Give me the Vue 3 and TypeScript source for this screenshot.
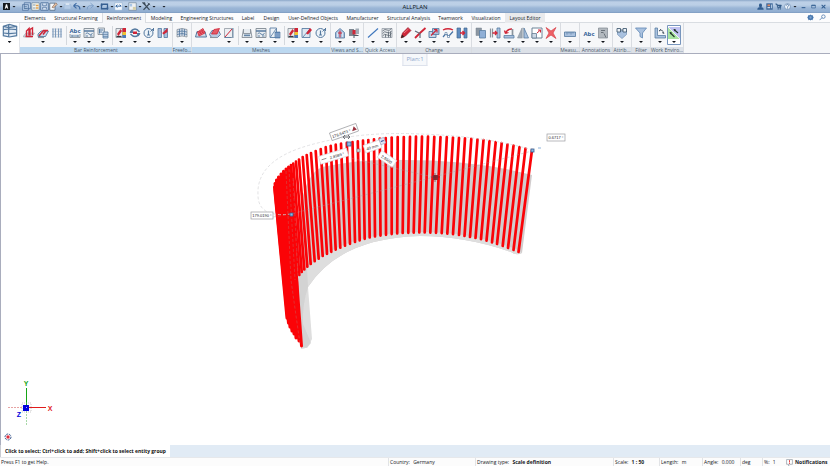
<script setup lang="ts">
type Shape = [d: string, fill: string, stroke?: string, width?: number]
interface Command { icon: string; name: string; menu?: boolean; active?: boolean }
interface Group { label: string; tone: string; sets: Command[][] }

const B = '#54799f'
const L = '#a9c1df'
const R = '#d02638'
const G = '#8b949d'
const N = 'none'

const icons: Record<string, Shape[]> = {
  views: [['M2 5l9-3 11 3v14l-11 2-9-2z', '#e6eef7', B, 1.8], ['M2 10l9-1 11 1M2 15l9 1 11-1M10 3v18M2 5l8 2 12-2', N, B, 1.8]],
  barShape: [['M1 18l5-6h17l-5 8H1z', '#ccd5de', G, 1], ['M5 19h15M7 18V8l5-5v14M14 17V5l5-3v14', N, R, 2.8]],
  barPlace: [['M2 14l6-6h15l-6 11H2z', '#c9d8ea', B, 1.8], ['M4 18l9-11h9M12 15l7-9', N, R, 3], ['M2 21h12', N, G, 2.4]],
  mesh: [['M2 4h20M2 20h20M2 9h20M2 15h20', N, '#c3c9cf', 1.2], ['M4 3v18M9 3v18M15 3v18M20 3v18', '#dfe6ee', '#7c9abc', 2.4]],
  dims: [['M2 14v7h20v-7', '#dfe5eb', G, 1.8], ['M5 18h14M6 16v4M18 16v4', N, B, 1.6]],
  table: [['M2 3h20v18H2z', '#e9edf1', G, 2], ['M2 8h20', N, B, 3], ['M5 14q3-5 7 0t7-2M5 18h5M14 18h5', N, B, 1.8]],
  copyBars: [['M2 2h13v13H2z', '#e1e8f0', G, 1.8], ['M4 6h9M4 10h6M5 4v9', N, B, 1.8], ['M12 10h10v12H12z', '#b9cde4', B, 1.6], ['M12 15h10M12 19h10', N, B, 1.2]],
  report: [['M2 3h13v18H2z', '#e8ebee', G, 1.8], ['M4 14l7-10 3 4-7 10z', R], ['M15 2h7v8h-7z', R], ['M15 10h7v6h-7z', '#f1c232'], ['M15 16h7v6h-7z', '#4b79b8'], ['M3 19h10', N, '#353c44', 2.4]],
  swap: [['M3 10q9-12 18 0M3 14q9 10 18 0', N, B, 2.6], ['M1 12h9L5 5zM23 12h-9l5 7z', B], ['M8 9h8v5H8z', R]],
  info: [['M2 12a9 9 0 1 1 18 0 9 9 0 1 1-18 0', '#eef4fa', B, 2], ['M11 7v9M8 16h6', N, B, 2.4], ['M15 9l7-7M21 2v6', N, B, 2]],
  columns: [['M2 3h7v18H2z', L, B, 1.6], ['M14 3h7v18h-7z', L, B, 1.6], ['M3 4l8 8 3-3 7-7v8l-8 5z', R]],
  freeform: [['M2 5q10-4 20 0v15q-10-4-20 0z', '#d5deea', G, 1.6], ['M2 10q10-4 20 0M2 15q10-4 20 0M7 4v15M12 3v14M17 4v14', N, B, 1.6]],
  meshRed: [['M1 20l3-11h16l3 11z', '#cfdae6', B, 2], ['M5 10l11-7 4 9-12 6z', '#ea7881', R, 1.6], ['M7 12l10-6M8 15l11-6M9 8l4 7M13 6l4 7', N, R, 1.5]],
  meshTilt: [['M1 15l5-8h13l4 8-6 6H5z', '#b9cce3', B, 1.8], ['M5 14l5-9 11-2-5 11z', '#e35b66', R, 1.6], ['M2 21h14', N, G, 2.2]],
  meshCut: [['M3 3h16v18H3z', '#eceff3', G, 1.5], ['M4 20L18 4', N, R, 2], ['M20 2v20M3 21h14', N, B, 1.6]],
  meshDims: [['M5 4L2 21h20L19 4M5 4v9h14V4', '#e6ebf0', G, 1.9], ['M6 17h12M8 14v5M12 14v5M16 14v5', N, B, 1.6]],
  meshCopy: [['M2 2h13v19H2z', '#edf2f7', B, 1.7], ['M3 20L14 4', N, B, 1.6], ['M12 10h10v12H12z', '#5f86b8', B, 1.3], ['M12 14h10M12 18h10', N, '#dbe6f2', 1]],
  meshEdit: [['M2 3h16v18H2z', '#dde7f1', B, 1.7], ['M4 20L16 6', N, B, 1.6], ['M10 13l8-11 4 4-8 9z', R]],
  house: [['M3 11l9-8 9 8v11H3z', '#a9c1df', B, 1.6], ['M12 7v14M8 12h8', N, R, 2], ['M7 20V11M17 20V11', N, '#edf3f9', 1.4]],
  section: [['M2 4h10v14H2z', '#7d8791'], ['M9 6h8v9H9z', R], ['M15 3h7v11h-7z', '#a3adb7'], ['M12 14v8M12 17h9', N, '#4f5963', 2]],
  line: [['M2 21L22 3', N, '#3f77bd', 2.2]],
  hatch: [['M2 3h20v18H2z', '#e6e9ec', G, 1.4], ['M3 8q5-5 9-2t9-3M3 13q4-6 9-2t9-3M3 18q4-6 9-2t9-3M15 9v12M19 9v12M9 15v6', N, '#59636e', 1.6]],
  pencil: [['M2 22l3-10L16 1l6 6-11 11z', R, '#8e1f2b', 1.2], ['M2 22l2-7 5 5z', '#3b2020'], ['M8 12l9-8', N, '#f59ba2', 1.4]],
  trim: [['M2 22l10-10L23 2', N, R, 3.6], ['M2 8l10 5v9', N, '#5d6b7a', 2.4]],
  modify: [['M2 9h14v12H2z', '#c6d7eb', B, 1.8], ['M9 3h13v12H9z', '#a6c0df', B, 1.6], ['M6 17L18 5M18 5h-6M18 5v6', N, R, 2.2]],
  polyline: [['M2 6q10-5 20 0', N, R, 2.6], ['M2 20l6-7 5 6 9-10', N, '#4873a3', 2.4], ['M6 11h4v4H6zM11 17h4v4h-4z', '#fff', B, 1.2]],
  gap: [['M2 2h7v20H2zM16 2h6v20h-6z', '#5f8cc0', '#44678f', 1.4], ['M8 12h9M13 8l4 4-4 4', N, R, 2.8]],
  copy: [['M2 2h11v15H2z', '#8c97a2', '#77838f', 1], ['M9 7h12v15H9z', '#8fafd6', B, 1.5]],
  move: [['M3 3v18M7 3v18', N, G, 2.4], ['M16 2h6v20h-6z', L, B, 1.6], ['M7 12h9M12 8l4 4-4 4', N, R, 2.6]],
  rotate: [['M2 17h20v5H2z', L, B, 1.5], ['M5 13Q8 4 18 4M5 13l-2-6M5 13l6-2', N, R, 2.6], ['M19 4v12', N, G, 3.4]],
  mirror: [['M10 2v20H1z', '#a0abb6', G, 1.2], ['M14 2v20h9z', L, B, 1.5], ['M12 1v22', N, '#6b7885', 1]],
  scale: [['M2 2h20v20H2z', '#fff', '#5f778d', 1.8], ['M2 13h9v9H2z', '#cdd9e6', '#5f778d', 1.5], ['M12 12l7-6M19 6h-5M19 6v5', N, R, 2]],
  remove: [['M2 1l10 7 10-7-6 11 6 11-10-7-10 7 6-11z', '#ee6267', '#d84148', 1.4]],
  ruler: [['M1 10h22v9H1z', L, B, 1.6], ['M6 10v5M10 10v3M14 10v5M18 10v3', N, B, 1.4]],
  label: [['M3 2h18v20H3z', '#b3b9bf', '#7f878f', 1.4], ['M8 7h8M8 11h5M14 13l4 8', N, '#636b73', 1.8]],
  attrib: [['M3 8h18v7l-9 8-9-8z', L, '#7897ba', 1.5], ['M2 3h7v7H2zM14 3h7v7h-7z', '#edf3f9', '#3f576f', 1.7], ['M9 6h5', N, '#3f576f', 1.7]],
  filter: [['M1 2h22l-8 10v10l-5-3v-7z', L, '#668cb8', 1.7]],
  angle: [['M2 2h5v15h16v5H2z', L, B, 1.5], ['M10 8q7-5 10 5M10 8l4-4M20 13l-4-2', N, '#4b5865', 1.8]],
  split: [['M0 0h24v24H0z', '#a8e3a0'], ['M0 0h24v24z', '#c0c2f2'], ['M0 0l24 24', N, '#eef7ef', 2], ['M12 5l8 7M4 11l9 9', N, '#24362a', 2.2], ['M11 4l5 1-3 4zM3 10l5 1-3 4z', '#24362a']],
  app: [['M0 0h24v24H0z', '#15191e'], ['M6 20l4-16h4l4 16h-3l-1-4h-4l-1 4z', '#fff']],
  newDoc: [['M6 2h17v15H6zM1 7h16v15H1z', '#b6cce6', '#496e9b', 2], ['M5 12h8M5 17h8', N, '#496e9b', 1.6]],
  open: [['M2 2h20v20H2z', '#f7f5e9', '#65809f', 2], ['M5 8h7M5 16h7', N, '#557ca9', 2], ['M13 7h7v4h-7zM13 14h7v4h-7z', '#e2a04c']],
  save: [['M2 2h20v20H2z', '#d3e1f1', '#496e9b', 2.3], ['M7 4v6h10V4M7 20v-6h10v6', N, '#496e9b', 2]],
  editDoc: [['M2 3h14v19H2z', '#f6f8fb', '#526b86', 2.2], ['M8 14l10-12 4 4-10 10z', '#e7c3a6', '#6e4c40', 1.4]],
  print: [['M3 7h18v12H3z', '#b4cbe6', '#9bb5d5', 1.5], ['M7 3h10v5H7z', '#dae6f3']],
  undo: [['M4 10h11q6 1 6 10M4 10l8-7M4 10l8 7', N, '#3f6ca5', 3]],
  redo: [['M20 10H9q-6 1-6 10M20 10l-8-7M20 10l-8 7', N, '#7e9fc7', 2.6]],
  refresh: [['M4 6h16v12H4z', N, '#365f92', 3.4], ['M1 9h7L4 3zM16 15h7l-3 6z', '#365f92']],
  page: [['M2 2h20v20H2z', '#f5f9fd', '#7fa0c8', 1.2], ['M5 11h14M5 11l4-4M5 11l4 4M19 11l-4-4', N, '#2d609e', 2.5]],
  sheet: [['M2 2h20v20H2z', '#eef1f3', '#61778f', 1.6], ['M4 5h7v7H4z', '#a8c5e5'], ['M13 13h8v8h-8z', '#d5cfa8']],
  tools: [['M4 21L20 4M4 3l16 18', N, '#3c4b5b', 3.4], ['M1 2h7v6zM15 2l7 6', '#3c4b5b', '#3c4b5b', 2]],
  user: [['M7 7a5 5 0 1 1 10 0v3q0 4-5 4t-5-4zM1 23q0-9 11-9t11 9z', '#315d90']],
  panel: [['M1 1h22v22H1z', '#3e689a'], ['M5 5h9v6H5z', '#e08d66'], ['M5 14h9v4H5zM17 5h3v13h-3z', '#c4d9ef']],
  cart: [['M1 3h6l3 13h11M7 7h15l-3 8H9z', '#315a87', '#315a87', 2], ['M9 18h4v4H9zM16 18h4v4h-4z', '#315a87']],
  help: [['M2 12a10 10 0 1 1 20 0 10 10 0 1 1-20 0', '#edf4fb', '#486f9d', 1.8], ['M8 9q0-4 4-4t4 4q0 2-4 4v3M12 18v2', N, '#2f5b90', 2.2]],
  minimize: [['M3 15h18v5H3z', '#315d90']],
  maximize: [['M3 5h18v14H3z', N, '#315d90', 3], ['M3 5h18v4H3z', '#315d90']],
  close: [['M3 4l18 17M21 4L3 21', N, '#315d90', 5]],
  gear: [['M12 2l3 2 4-1 1 4 3 5-3 5-1 4-4-1-3 2-3-2-4 1-1-4-3-5 3-5 1-4 4 1z', '#4777ae'], ['M8 12a4 4 0 1 1 8 0 4 4 0 1 1-8 0', '#7fa3cd']],
  search: [['M9 9a6 6 0 1 1 12 0 6 6 0 1 1-12 0M10 13l-8 8', N, '#5c83b3', 3]],
  notice: [['M2 2h20v16h-8l-5 5v-5H2z', '#fff', '#61707f', 1.7], ['M12 4v8M12 14v3', N, '#df2b2b', 3]],
}

const c = (icon: string, name: string, menu = true, active = false): Command => ({ icon, name, menu, active })

const groups: Group[] = [
  { label: 'Bar Reinforcement', tone: 'task', sets: [
    [c('barShape', 'Bar shape', false), c('barPlace', 'Place bars'), c('mesh', 'Span reinforcement', false)],
    [c('dims', 'Label bars'), c('table', 'Schedule'), c('copyBars', 'Copy bars')],
    [c('report', 'Reports'), c('swap', 'Convert'), c('info', 'Check'), c('columns', 'Match', false)]] },
  { label: 'Freefo...', tone: 'task', sets: [[c('freeform', 'Freeform')]] },
  { label: 'Meshes', tone: 'task', sets: [
    [c('meshRed', 'Mesh shape', false), c('meshTilt', 'Place mesh', false), c('meshCut', 'Cut mesh')],
    [c('meshDims', 'Label mesh'), c('table', 'Mesh schedule'), c('meshCopy', 'Copy mesh')],
    [c('report', 'Mesh reports'), c('meshEdit', 'Edit mesh'), c('info', 'Check mesh')]] },
  { label: 'Views and S...', tone: 'mid', sets: [[c('house', 'View'), c('section', 'Section')]] },
  { label: 'Quick Access', tone: 'soft', sets: [[c('line', 'Line'), c('hatch', 'Hatching')]] },
  { label: 'Change', tone: 'plain', sets: [[c('pencil', 'Edit'), c('trim', 'Trim'), c('modify', 'Modify'), c('polyline', 'Points'), c('gap', 'Join')]] },
  { label: 'Edit', tone: 'plain', sets: [[c('copy', 'Copy'), c('move', 'Move'), c('rotate', 'Rotate'), c('mirror', 'Mirror'), c('scale', 'Resize'), c('remove', 'Delete')]] },
  { label: 'Measu...', tone: 'plain', sets: [[c('ruler', 'Measure')]] },
  { label: 'Annotations', tone: 'plain', sets: [[c('text', 'Text'), c('label', 'Label')]] },
  { label: 'Attrib...', tone: 'plain', sets: [[c('attrib', 'Attributes')]] },
  { label: 'Filter', tone: 'plain', sets: [[c('filter', 'Filter')]] },
  { label: 'Work Enviro...', tone: 'plain', sets: [[c('angle', 'Coordinates'), c('split', 'Track lines', true, true)]] },
]

const quick: Command[] = [
  c('newDoc', 'New project', false), c('open', 'Open', false), c('save', 'Save', false), c('editDoc', 'Edit document'),
  c('print', 'Print', false), c('undo', 'Undo'), c('redo', 'Redo'), c('refresh', 'Refresh'),
  c('page', 'Page'), c('sheet', 'Sheet'), c('tools', 'Tools'),
]

const tabs = ['Elements', 'Structural Framing', 'Reinforcement', 'Modeling', 'Engineering Structures', 'Label', 'Design',
  'User-Defined Objects', 'Manufacturer', 'Structural Analysis', 'Teamwork', 'Visualization', 'Layout Editor']

// Bar ends on the curved wall, from the right edge round to the left: top x, top y, foot x, foot y
const bars: number[][] = [
  [532, 150, 518.5, 252], [525.5, 148.5, 513.5, 250], [519.5, 147, 508, 248], [513.5, 145.6, 502.7, 246], [507.5, 144.3, 497, 244],
  [501.7, 143, 492, 242.3], [495.7, 142, 486.5, 240.6], [489.5, 141, 481, 239.2], [483.5, 140, 475.5, 238], [477.5, 139.4, 470, 237],
  [471.3, 138.8, 464.5, 236], [465, 138.3, 459, 235], [459, 137.9, 453, 234.2], [453, 137.5, 447.3, 233.6], [446.8, 137.2, 441.7, 233.1],
  [440.5, 137, 436, 232.8], [434.3, 136.8, 430.3, 232.6], [428, 136.7, 424.7, 232.5], [422, 136.6, 419.3, 232.5], [416, 136.6, 413.7, 232.6],
  [410, 136.8, 408.3, 232.8], [403.8, 137, 402.7, 233], [397.7, 137.2, 397.2, 233.5], [391.7, 137.6, 391.7, 234.1], [385.7, 138, 386, 234.8],
  [379.8, 138.6, 380.5, 235.6], [374, 139.3, 375, 236.4], [368.3, 140, 369.7, 237.4], [363, 140.7, 364.7, 238.8], [357.8, 141.4, 359.7, 240.4],
  [352.5, 142.1, 355, 242], [346.8, 142.9, 350, 243.8], [341, 143.6, 345, 245.7], [335.7, 144.6, 340.3, 247.7], [330.7, 145.8, 335.7, 249.6],
  [325.7, 147.2, 331.3, 251.8], [320.7, 149, 327, 253.8], [315.7, 151, 322.7, 256], [311, 153, 318.7, 258.6], [306.7, 155, 314.7, 261.2],
  [302.7, 157.2, 310.7, 264], [299, 159.5, 307.3, 266.6], [296, 161.5, 304.3, 269.4], [293.3, 163.5, 301.7, 272], [291, 165, 299.3, 275],
]
// Bars of the near leg overlap into a solid band
const leg: number[][] = [
  [274.5, 187, 287, 318], [275, 183.5, 288.5, 323], [276.5, 180, 290, 327], [278.5, 177, 292, 331], [281, 174, 294, 334],
  [283.5, 171.3, 296, 338], [286, 169, 299, 341], [288.5, 167, 301.5, 346],
]
</script>

<template>
  <div class="app">
    <header class="titlebar">
      <div class="quick">
        <button class="logo" aria-label="Application menu">
          <svg viewBox="0 0 24 24"><path v-for="(s, i) in icons.app" :key="i" :d="s[0]" :fill="s[1]" /></svg>
          <i class="arrow"></i>
        </button>
        <button v-for="q in quick" :key="q.name" :class="{ menu: q.menu }" :aria-label="q.name">
          <svg viewBox="0 0 24 24"><path v-for="(s, i) in icons[q.icon]" :key="i" :d="s[0]" :fill="s[1]" :stroke="s[2]" :stroke-width="s[3]" /></svg>
          <i v-if="q.menu" class="arrow"></i>
        </button>
        <button class="customize" aria-label="Customize toolbar"><i class="arrow"></i></button>
      </div>
      <h1>ALLPLAN</h1>
      <div class="window">
        <button v-for="w in ['user', 'panel', 'cart', 'help']" :key="w" :aria-label="w">
          <svg viewBox="0 0 24 24"><path v-for="(s, i) in icons[w]" :key="i" :d="s[0]" :fill="s[1]" :stroke="s[2]" :stroke-width="s[3]" /></svg>
          <i v-if="w === 'help'" class="arrow"></i>
        </button>
        <button v-for="w in ['minimize', 'maximize', 'close']" :key="w" class="frame" :aria-label="w">
          <svg viewBox="0 0 24 24"><path v-for="(s, i) in icons[w]" :key="i" :d="s[0]" :fill="s[1]" :stroke="s[2]" :stroke-width="s[3]" /></svg>
        </button>
      </div>
    </header>

    <nav class="tabs">
      <div class="tablist">
        <button v-for="t in tabs" :key="t" :class="{ current: t === 'Reinforcement', layout: t === 'Layout Editor' }">{{ t }}</button>
      </div>
      <div class="tabtools">
        <button v-for="w in ['gear', 'search']" :key="w" :aria-label="w">
          <svg viewBox="0 0 24 24"><path v-for="(s, i) in icons[w]" :key="i" :d="s[0]" :fill="s[1]" :stroke="s[2]" :stroke-width="s[3]" /></svg>
        </button>
      </div>
    </nav>

    <section class="ribbon">
      <button class="views" aria-label="Views">
        <svg viewBox="0 0 24 24"><path v-for="(s, i) in icons.views" :key="i" :d="s[0]" :fill="s[1]" :stroke="s[2]" :stroke-width="s[3]" /></svg>
        <i class="arrow"></i>
      </button>
      <div v-for="g in groups" :key="g.label" class="group">
        <div class="commands">
          <div v-for="(set, n) in g.sets" :key="n" class="set">
            <button v-for="b in set" :key="b.name" :class="{ active: b.active }" :aria-label="b.name">
              <svg v-if="b.icon === 'text'" viewBox="0 0 24 24"><text x="12" y="17" class="abc">Abc</text></svg>
              <svg v-else viewBox="0 0 24 24">
                <path v-for="(s, i) in icons[b.icon]" :key="i" :d="s[0]" :fill="s[1]" :stroke="s[2]" :stroke-width="s[3]" />
                <text v-if="b.icon === 'dims'" x="12" y="11" class="abc">Abc</text>
              </svg>
              <i v-if="b.menu" class="arrow"></i>
            </button>
          </div>
        </div>
        <div class="caption" :class="g.tone">{{ g.label }}</div>
      </div>
    </section>

    <main class="canvas">
      <span class="plan">Plan:1</span>
      <svg class="scene" viewBox="0 54 830 391" role="img" aria-label="Curved wall with vertical reinforcement">
        <path class="wall-top" d="M322 167Q365 158 405 160Q475 160 532 175L522 253Q516 256 511 252Q465 236 420 236Q340 238 308 287L298 278Q293 180 322 167Z" />
        <path class="wall-base" d="M298 278Q335 232 420 232Q470 231 518 250L522 253Q516 256 511 252Q465 236 420 236Q340 238 308 287L312 339Q308 349 301 349Z" />
        <path class="wall-end" d="M307 268L308 287Q302 305 303 324L311 343L307 348L302 347L298 278Z" />

        <g class="leg"><line v-for="(b, i) in leg" :key="i" :x1="b[0]" :y1="b[1]" :x2="b[2]" :y2="b[3]" /></g>
        <path class="leg-fill" d="M273.5 190L275 182L282 173L290 166L293 190L298 278L301 344L291 330L286 317Z" />
        <g class="bars"><line v-for="(b, i) in bars" :key="i" :x1="b[0]" :y1="b[1]" :x2="b[2]" :y2="b[3]" /></g>
        <path class="seams" d="M286 171L291 280L300 344M289 169L295 280M293 178L298 276" />

        <path class="guide" d="M291 214Q258 218 258 195Q256 160 310 145Q360 131 420 134Q485 136 533 150" />
        <path class="guide inner" d="M273 217L291 214L434 177M433 177L350 158M434 177L532 151" />

        <g transform="translate(344 132) rotate(-20)">
          <rect class="tag" x="-14" y="-4" width="28" height="8" />
          <text class="value" x="-3" y="2">178.6473 °</text>
          <path d="M8 2l3-4 2 4z" fill="#9a3440" />
        </g>
        <g transform="translate(334 156) rotate(-17)">
          <rect class="tag soft" x="-15" y="-4" width="29" height="8" />
          <path d="M-13 0h5" stroke="#555" stroke-width=".6" />
          <text class="value" x="3" y="2">2.8989 °</text>
        </g>
        <g transform="translate(374 146) rotate(-19)">
          <rect class="tag soft" x="-10" y="-4" width="17" height="8" />
          <text class="value" x="-2" y="2">40 mm</text>
          <rect x="7" y="-5" width="5" height="6" fill="#dfe3f2" stroke="#9da6c4" stroke-width=".6" />
          <path d="M8 -2h3" stroke="#33509a" />
        </g>
        <g transform="translate(387 159) rotate(34)">
          <rect class="tag soft" x="-9" y="-4" width="18" height="8" />
          <text class="value" x="0" y="2">2.9500</text>
        </g>
        <rect class="tag" x="547" y="134" width="18" height="7" />
        <text class="value" x="556" y="139">0.6717 °</text>
        <rect class="tag" x="251" y="212" width="22" height="7" />
        <text class="value" x="262" y="217">179.0190 °</text>

        <path d="M343 137h7M345 135l-2 2 2 2M348 135l2 2-2 2" fill="none" stroke="#6f7279" />
        <rect class="handle" x="347" y="142" width="4" height="4" />
        <rect class="handle" x="290" y="213" width="3" height="3" />
        <rect class="handle" x="531" y="149" width="3" height="3" />
        <rect x="357" y="149" width="3" height="3" fill="#d9d9dd" stroke="#75777e" stroke-width=".6" />
        <path d="M538 148h3" stroke="#8fb3da" />
        <rect x="433" y="175" width="5" height="5" fill="#832e37" />
        <path d="M431 177h9M435 173v9" stroke="#6b252d" stroke-width=".6" />

        <path d="M8 407.500h18" stroke="#e6a3a3" stroke-dasharray="2 1" />
        <path d="M26.500 408v18" stroke="#a8d8a8" stroke-dasharray="2 1" />
        <path d="M26.500 388v17" stroke="#16a516" />
        <path d="M29 407.500h17" stroke="#e01c1c" />
        <path d="M22 403h9v9h-9z" fill="none" stroke="#aaa" stroke-width=".6" stroke-dasharray="1 1" />
        <rect x="23" y="405" width="6" height="6" fill="#0000dc" />
        <rect x="26" y="407" width="1" height="1" fill="#a9b4ff" />
        <text class="axis y" x="26" y="386">Y</text>
        <text class="axis x" x="50" y="411">X</text>
        <text class="axis z" x="19" y="417">Z</text>

        <circle cx="8" cy="437" r="3" fill="none" stroke="#3d5a8f" stroke-dasharray="2 1" />
        <rect x="6.500" y="435.500" width="3" height="3" fill="#e02e3c" />
      </svg>
    </main>

    <div class="prompt"><p>Click to select; Ctrl+click to add; Shift+click to select entity group</p></div>

    <footer class="status">
      <span class="help">Press F1 to get Help.</span>
      <div class="cells">
        <span>Country: <em>Germany</em></span>
        <span>Drawing type: <b>Scale definition</b></span>
        <span>Scale: <b>1 : 50</b></span>
        <span>Length: <em>m</em></span>
        <span>Angle: <em>0.000</em></span>
        <span>deg</span>
        <span>%: <em>1</em></span>
        <button>
          <svg viewBox="0 0 24 24"><path v-for="(s, i) in icons.notice" :key="i" :d="s[0]" :fill="s[1]" :stroke="s[2]" :stroke-width="s[3]" /></svg>
          Notifications
        </button>
      </div>
    </footer>
  </div>
</template>

<style>
body { margin: 0; background: #fff; }
</style>

<style scoped>
* { box-sizing: border-box; }
.app { display: flex; flex-direction: column; height: 100vh; font: 5px/8px "Open Sans", "Noto Sans", sans-serif; color: #16191d; overflow: hidden; }
button { display: flex; align-items: center; justify-content: center; margin: 0; padding: 0; border: 0; background: none; font: inherit; color: inherit; white-space: nowrap; }
svg { display: block; flex: none; }
.arrow { flex: none; width: 4px; height: 2px; background: #10141a; clip-path: polygon(0 0, 100% 0, 50% 100%); }

.titlebar { display: grid; grid-template-columns: 1fr auto 1fr; align-items: center; flex: none; height: 13px; background: linear-gradient(#8ca8c9 0, #bdd0e7 2px, #bbcfe6 5px, #9bb6d6 8px, #90add0 12px, #7896bb 13px); }
.titlebar h1 { margin: 0; font-size: 6px; font-weight: 400; color: #0d1620; }
.quick, .window { display: flex; align-items: center; }
.quick button { width: 9px; justify-content: flex-start; }
.quick .menu { width: 14px; gap: 1px; }
.quick svg { width: 9px; height: 9px; }
.quick .logo { width: 22px; padding-left: 3px; gap: 2px; }
.quick .logo svg { width: 7px; height: 7px; }
.quick .customize { width: 16px; justify-content: center; }
.window { justify-content: flex-end; padding-right: 2px; }
.window button { width: 9px; gap: 2px; }
.window button:nth-child(4) { width: 15px; }
.window .frame { width: 10px; }
.window svg { width: 7px; height: 7px; }
.window .frame svg { width: 5px; height: 5px; }

.tabs { display: flex; justify-content: space-between; flex: none; height: 10px; padding-left: 20px; background: #fcfcfd; border-bottom: 1px solid #d9dde2; }
.tablist { display: grid; grid-template-columns: 30px 52px 44px 31px 60px 22px 25px 58px 41px 51px 33px 38px 40px; }
.tablist .current { height: 10px; background: #f6f7f9; border: 1px solid #dadde1; border-width: 0 1px; }
.tablist .layout { background: #e9eaec; }
.tabtools { display: flex; gap: 5px; padding-right: 4px; }
.tabtools svg { width: 7px; height: 7px; }

.ribbon { display: flex; flex: none; height: 31px; background: #f6f7f9; border-bottom: 1px solid #a9adbd; }
.views { flex: none; flex-direction: column; justify-content: flex-start; gap: 2px; width: 20px; background: #fff; border-right: 1px solid #e2e5ea; }
.views svg { width: 16px; height: 16px; }
.group { display: flex; flex-direction: column; flex: none; border-right: 1px solid #d9dce1; }
.commands { display: flex; flex: 1; padding: 2px; gap: 4px; }
.set { display: flex; position: relative; }
.set + .set::before { content: ""; position: absolute; top: 1px; bottom: 0; left: -2px; width: 1px; background: #d4d8dd; }
.set button { flex-direction: column; justify-content: flex-start; width: 14px; padding-top: 2px; gap: 2px; border-radius: 1px; }
.set button svg { width: 12px; height: 12px; overflow: visible; }
.set .active { background: #fff; box-shadow: inset 0 0 0 1px #7795bd; }
.abc { font: 700 12px "Open Sans", sans-serif; fill: #2f6096; text-anchor: middle; }
.caption { display: flex; justify-content: center; width: 0; min-width: 100%; height: 6px; line-height: 6px; color: #4b596a; white-space: nowrap; }
.task { background: #bcd8f0; }
.mid { background: #cadff0; }
.caption.soft { background: #dde8f1; }
.plain { background: #dce1e8; }

.canvas { position: relative; flex: 1; min-height: 0; background: #fff; box-shadow: inset 1px 0 #a9adbd; }
.scene { width: 100%; height: 100%; }
.plan { position: absolute; top: 0; left: 50%; transform: translateX(-50%); padding: 1px 3px 2px; border: 1px solid #dde2ec; border-top: 0; background: #f6f8fb; font-size: 6px; color: #8fa6cc; white-space: nowrap; }
.wall-top { fill: #d1cccd; }
.wall-base { fill: #dedede; }
.wall-end { fill: #d0d0d0; opacity: .8; }
.bars line { stroke: #fb0307; stroke-width: 2.700; stroke-linecap: round; }
.leg line { stroke: #fb0307; stroke-width: 3; stroke-linecap: round; }
.leg-fill { fill: #fb0307; }
.seams { fill: none; stroke: #bd6a68; stroke-width: .6; stroke-dasharray: 3 2; opacity: .7; }
.guide { fill: none; stroke: #d5d5d8; stroke-width: .7; stroke-dasharray: 3 2; }
.inner { stroke: #a6979b; stroke-width: .5; opacity: .7; }
.tag { fill: #fff; stroke: #9b9ca0; stroke-width: .7; }
.tag.soft { stroke: #dadade; }
.value { font: 4px "Liberation Sans", sans-serif; fill: #26282c; text-anchor: middle; }
.handle { fill: #8db7e4; stroke: #356292; stroke-width: .8; }
.axis { font: 700 7px "Liberation Sans", sans-serif; text-anchor: middle; }
.x { fill: #e01c1c; }
.y { fill: #16a516; }
.z { fill: #0000dc; }

.prompt { flex: none; height: 12px; background: #e1ebf5; display: flex; }
.prompt p { margin: 0; padding: 0 4px; border-left: 1px solid #c9ccd2; background: #fff; font-weight: 700; font-size: 5px; line-height: 12px; color: #111; white-space: nowrap; }
.status { display: flex; justify-content: space-between; flex: none; height: 9px; line-height: 9px; background: #fcfcfc; white-space: nowrap; border-top: 1px solid #e6e8eb; }
.help { padding-left: 1px; }
.cells { display: grid; grid-template-columns: 87px 138px 46px 43px 38px 22px 22px 46px; }
.cells span { border-left: 1px solid #e1e3e6; padding-left: 1px; }
.cells em { font-style: normal; padding-left: 2px; }
.cells b { font-weight: 700; padding-left: 2px; }
.cells button { gap: 2px; font-weight: 700; justify-content: flex-start; padding-left: 2px; }
.cells svg { width: 7px; height: 7px; }
</style>
